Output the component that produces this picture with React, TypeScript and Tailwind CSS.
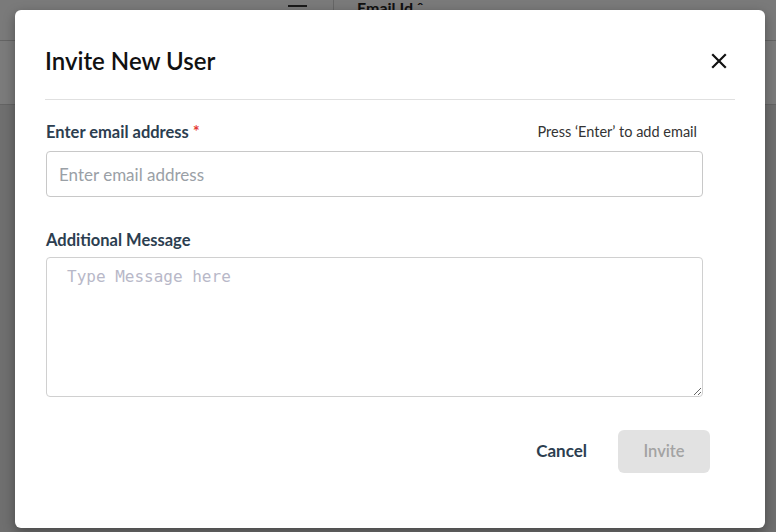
import React from 'react'

function CloseIcon() {
  return (
    <svg width="16" height="16" viewBox="0 0 16 16" fill="none" stroke="#111" strokeWidth="2.2" strokeLinecap="square">
      <path d="M2 2 L14 14 M14 2 L2 14" />
    </svg>
  )
}

function Backdrop() {
  // the table page sitting behind the dimmed overlay
  return (
    <div className="absolute inset-0 bg-[#dedede]">
      <div className="h-[41px] bg-[#f4f4f4] border-b border-[#c8c8c8]" />
      <div className="h-[64px] bg-[#f6f6f6] border-b border-[#c8c8c8]" />
      <div className="absolute left-[288px] top-[-4px] flex items-center">
        <div className="flex flex-col gap-[3px]">
          <div className="h-[2px] w-[19px] bg-[#333]" />
          <div className="h-[2px] w-[19px] bg-[#333]" />
        </div>
        <div className="ml-[26px] h-[20px] w-px bg-[#ccc]" />
        <div className="ml-[23px] text-[16px] font-bold text-[#222]">Email Id ˆ</div>
      </div>
      <div className="absolute inset-0 bg-black/50" />
    </div>
  )
}

export default function App() {
  return (
    <div className="relative h-[532px] w-[776px] overflow-hidden font-['Lato','Liberation_Sans',sans-serif]">
      <Backdrop />
      <div className="absolute left-[15px] top-[10px] h-[518px] w-[750px] rounded-[6px] bg-white px-[30px] shadow-[0_4px_12px_rgba(0,0,0,0.35)]">
        <div className="flex items-center justify-between pt-[36px] pb-[23px] border-b border-[#e0e0e0]">
          <h2 className="text-[24px] leading-[30px] font-semibold text-[#111]">Invite New User</h2>
          <button className="mr-[6px] flex h-[20px] w-[20px] items-center justify-center">
            <CloseIcon />
          </button>
        </div>

        <div className="w-[658px] pl-px">
          <div className="mt-[20px] flex items-center justify-between">
            <label className="text-[16.5px] leading-[24px] font-bold text-[#2c3e50]">
              Enter email address <span className="font-semibold text-[#e53935]">*</span>
            </label>
            <span className="mr-[6px] text-[14.5px] leading-[24px] text-[#333]">Press ‘Enter’ to add email</span>
          </div>
          <input
            className="mt-[7px] block h-[46px] w-full rounded-[4px] border border-[#c8c8c8] px-[12px] text-[17px] text-[#333] outline-none placeholder:text-[#9aa0a6]"
            placeholder="Enter email address"
          />

          <label className="mt-[31px] block text-[16.5px] leading-[24px] font-bold text-[#2c3e50]">Additional Message</label>
          <textarea
            className="mt-[5px] block h-[140px] w-full rounded-[4px] border border-[#d0d0d0] px-[20px] pt-[7px] pb-[8px] font-['DejaVu_Sans_Mono',monospace] text-[16px] text-[#333] outline-none placeholder:text-[#b8b8c8]"
            placeholder="Type Message here"
          />
        </div>

        <div className="mt-[33px] flex w-[665px] items-center justify-end gap-[31px]">
          <button className="pb-px text-[17px] font-bold text-[#2c3e50]">Cancel</button>
          <button className="h-[43px] w-[92px] rounded-[6px] bg-[#e2e2e2] pb-px text-[16.5px] font-semibold text-[#a3a3a3]">Invite</button>
        </div>
      </div>
    </div>
  )
}
